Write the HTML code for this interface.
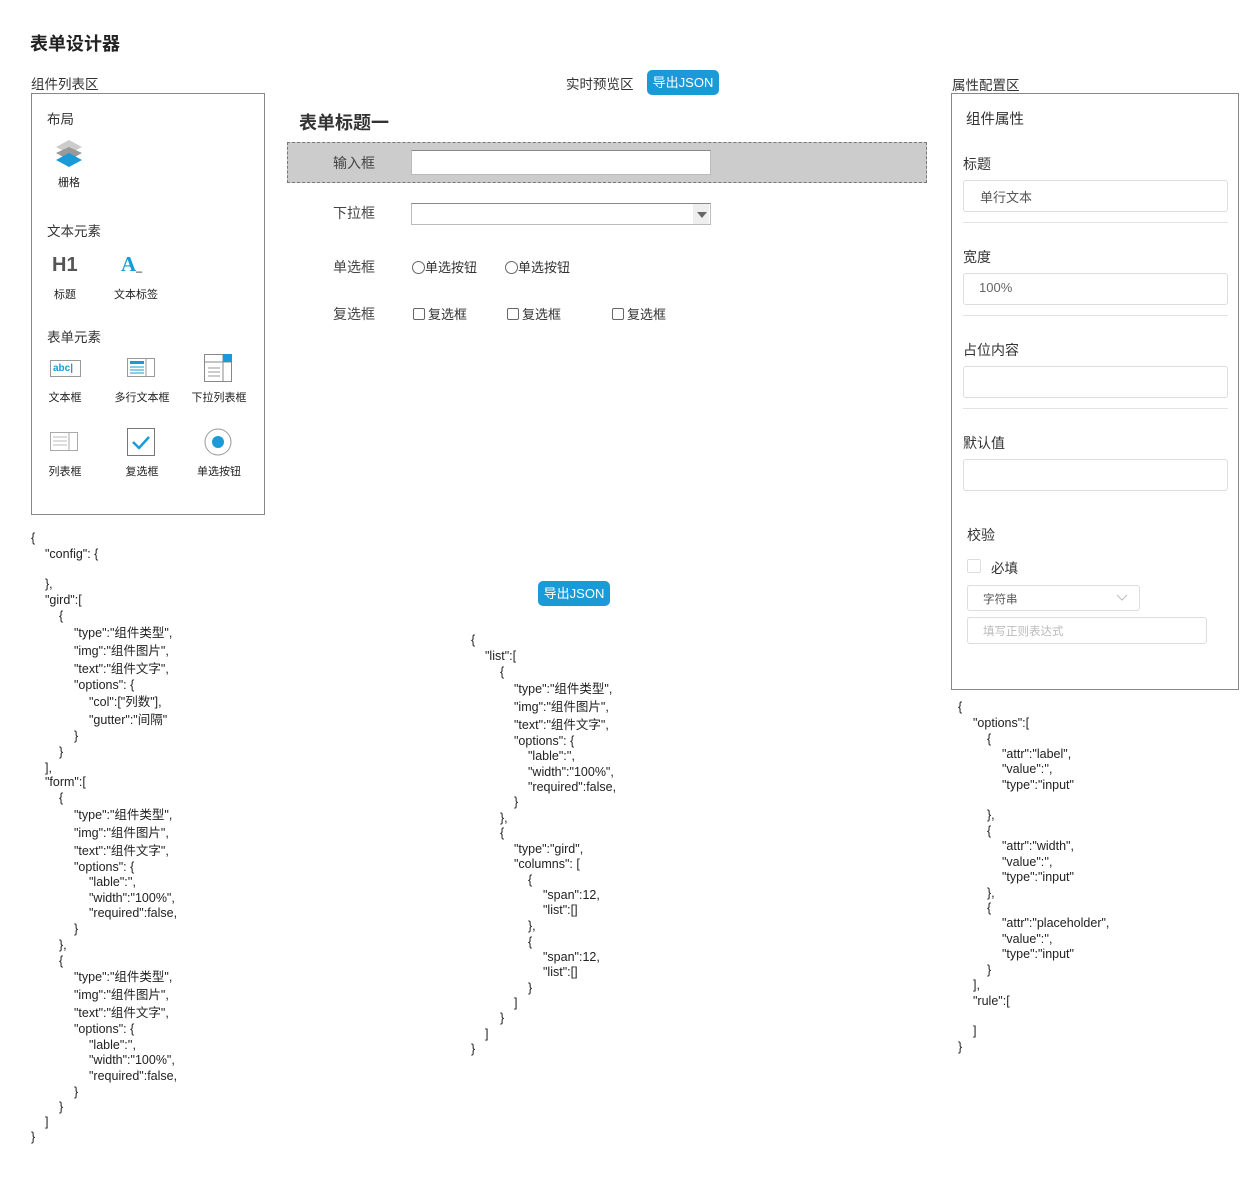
<!DOCTYPE html>
<html><head><meta charset="utf-8"><style>
body{margin:0;width:1259px;height:1190px;background:#fff;position:relative;font-family:"Liberation Sans","Noto Sans CJK SC",sans-serif;color:#333;overflow:hidden}
.a{position:absolute;white-space:nowrap}
.j{position:absolute;font-size:12.5px;line-height:16px;letter-spacing:0;color:#222;white-space:pre}
.btn{position:absolute;background:#1a9ad6;color:#fff;border-radius:5px;font-size:13px;text-align:center;line-height:25px}
.lbl{position:absolute;font-size:14px;color:#444}
.inp{position:absolute;border:1px solid #ddd;border-radius:3px;background:#fff;box-sizing:border-box}
.hr{position:absolute;height:1px;background:#e3e3e3}
.it{position:absolute;font-size:11px;color:#222;text-align:center;width:70px}
</style></head><body>
<div class="a" style="left:30px;top:30px;font-size:18px;font-weight:bold;color:#222">表单设计器</div>
<div class="a" style="left:31px;top:73px;font-size:13.5px;color:#333">组件列表区</div>
<div style="position:absolute;left:31px;top:93px;width:232px;height:420px;border:1px solid #888"></div>
<div class="a" style="left:47px;top:108px;font-size:13.5px">布局</div>
<svg class="a" style="left:55px;top:140px" width="28" height="28" viewBox="0 0 28 28"><polygon points="14,0 27,7 14,14 1,7" fill="#ccc"/><polygon points="14,7 27,13 14,20 1,13" fill="#999"/><polygon points="14,13 27,20 14,27 1,20" fill="#1a9ad6"/></svg>
<div class="it" style="left:34px;top:174px">栅格</div>
<div class="a" style="left:47px;top:220px;font-size:13.5px">文本元素</div>
<div class="a" style="left:52px;top:254px;font-size:20px;font-weight:bold;color:#555">H1</div>
<div class="a" style="left:121px;top:252px;font-size:21px;font-weight:bold;color:#1a9ad6;font-family:'Liberation Serif',serif">A<span style="font-size:12px;color:#333">_</span></div>
<div class="it" style="left:30px;top:286px">标题</div>
<div class="it" style="left:101px;top:286px">文本标签</div>
<div class="a" style="left:47px;top:326px;font-size:13.5px">表单元素</div>
<div class="a" style="left:50px;top:360px;width:27px;height:15px;border:1px solid #999;font-size:10px;font-weight:bold;color:#1a9ad6;line-height:15px;padding-left:2px;box-sizing:content-box">abc|</div>
<svg class="a" style="left:127px;top:358px" width="28" height="19"><rect x="0.5" y="0.5" width="27" height="18" fill="#fff" stroke="#999"/><line x1="19" y1="1" x2="19" y2="18" stroke="#999"/><rect x="3" y="3" width="14" height="3" fill="#1a9ad6"/><line x1="3" y1="9" x2="17" y2="9" stroke="#1a9ad6"/><line x1="3" y1="12" x2="17" y2="12" stroke="#1a9ad6"/><line x1="3" y1="15" x2="17" y2="15" stroke="#1a9ad6"/></svg>
<svg class="a" style="left:204px;top:354px" width="28" height="28"><rect x="0.5" y="0.5" width="27" height="27" fill="#fff" stroke="#888"/><line x1="0" y1="8" x2="28" y2="8" stroke="#888"/><line x1="19" y1="0" x2="19" y2="28" stroke="#888"/><rect x="19" y="0" width="9" height="8" fill="#1a9ad6"/><line x1="4" y1="14" x2="16" y2="14" stroke="#999"/><line x1="4" y1="18" x2="16" y2="18" stroke="#999"/><line x1="4" y1="22" x2="16" y2="22" stroke="#999"/></svg>
<div class="it" style="left:30px;top:389px">文本框</div>
<div class="it" style="left:107px;top:389px">多行文本框</div>
<div class="it" style="left:184px;top:389px">下拉列表框</div>
<svg class="a" style="left:50px;top:432px" width="28" height="19"><rect x="0.5" y="0.5" width="27" height="18" fill="#fff" stroke="#aaa"/><line x1="19" y1="1" x2="19" y2="18" stroke="#aaa"/><line x1="3" y1="5" x2="17" y2="5" stroke="#bbb"/><line x1="3" y1="9" x2="17" y2="9" stroke="#bbb"/><line x1="3" y1="13" x2="17" y2="13" stroke="#bbb"/></svg>
<svg class="a" style="left:127px;top:428px" width="28" height="28"><rect x="0.5" y="0.5" width="27" height="27" fill="#fff" stroke="#777"/><polyline points="6,14 12,20 22,9" fill="none" stroke="#1a9ad6" stroke-width="2.5"/></svg>
<svg class="a" style="left:204px;top:428px" width="28" height="28"><circle cx="14" cy="14" r="13" fill="#fff" stroke="#999"/><circle cx="14" cy="14" r="6" fill="#1a9ad6"/></svg>
<div class="it" style="left:30px;top:463px">列表框</div>
<div class="it" style="left:107px;top:463px">复选框</div>
<div class="it" style="left:184px;top:463px">单选按钮</div>

<div class="a" style="left:566px;top:73px;font-size:13.5px">实时预览区</div>
<div class="btn" style="left:647px;top:70px;width:72px">导出JSON</div>
<div class="a" style="left:299px;top:109px;font-size:18px;font-weight:bold;color:#333">表单标题一</div>
<div style="position:absolute;left:287px;top:142px;width:638px;height:39px;background:#ccc;border:1px dashed #777"></div>
<div class="lbl" style="left:333px;top:153px">输入框</div>
<div style="position:absolute;left:411px;top:150px;width:298px;height:23px;background:#fff;border:1px solid #bbb;border-top:1px solid #888"></div>
<div class="lbl" style="left:333px;top:203px">下拉框</div>
<div style="position:absolute;left:411px;top:203px;width:298px;height:20px;background:#fff;border:1px solid #bbb;border-top:1px solid #888"></div>
<div style="position:absolute;left:693px;top:204px;width:16px;height:20px;background:#eee"></div>
<div class="a" style="left:697px;top:212px;width:0;height:0;border-left:5px solid transparent;border-right:5px solid transparent;border-top:6px solid #666"></div>
<div class="lbl" style="left:333px;top:257px">单选框</div>
<div class="a" style="left:412px;top:257px;font-size:13px"><span style="display:inline-block;width:11px;height:11px;border:1px solid #666;border-radius:50%;vertical-align:-2px"></span>单选按钮</div>
<div class="a" style="left:505px;top:257px;font-size:13px"><span style="display:inline-block;width:11px;height:11px;border:1px solid #666;border-radius:50%;vertical-align:-2px"></span>单选按钮</div>
<div class="lbl" style="left:333px;top:304px">复选框</div>
<div class="a" style="left:413px;top:304px;font-size:13px"><span style="display:inline-block;width:10px;height:10px;border:1px solid #666;border-radius:2px;vertical-align:-1px;margin-right:3px"></span>复选框</div>
<div class="a" style="left:507px;top:304px;font-size:13px"><span style="display:inline-block;width:10px;height:10px;border:1px solid #666;border-radius:2px;vertical-align:-1px;margin-right:3px"></span>复选框</div>
<div class="a" style="left:612px;top:304px;font-size:13px"><span style="display:inline-block;width:10px;height:10px;border:1px solid #666;border-radius:2px;vertical-align:-1px;margin-right:3px"></span>复选框</div>
<div class="btn" style="left:538px;top:581px;width:72px">导出JSON</div>

<div class="a" style="left:952px;top:74px;font-size:13.5px">属性配置区</div>
<div style="position:absolute;left:951px;top:93px;width:286px;height:595px;border:1px solid #888"></div>
<div class="a" style="left:966px;top:108px;font-size:14.5px">组件属性</div>
<div class="a" style="left:963px;top:154px;font-size:14px">标题</div>
<div class="inp" style="left:963px;top:180px;width:265px;height:32px"></div>
<div class="a" style="left:980px;top:187px;font-size:13px;color:#555">单行文本</div>
<div class="hr" style="left:963px;top:222px;width:265px"></div>
<div class="a" style="left:963px;top:247px;font-size:14px">宽度</div>
<div class="inp" style="left:963px;top:273px;width:265px;height:32px"></div>
<div class="a" style="left:979px;top:280px;font-size:13px;color:#666">100%</div>
<div class="hr" style="left:963px;top:315px;width:265px"></div>
<div class="a" style="left:963px;top:340px;font-size:14px">占位内容</div>
<div class="inp" style="left:963px;top:366px;width:265px;height:32px"></div>
<div class="hr" style="left:963px;top:408px;width:265px"></div>
<div class="a" style="left:963px;top:433px;font-size:14px">默认值</div>
<div class="inp" style="left:963px;top:459px;width:265px;height:32px"></div>
<div class="a" style="left:967px;top:525px;font-size:14px">校验</div>
<div class="inp" style="left:967px;top:559px;width:14px;height:14px;border-radius:2px"></div>
<div class="a" style="left:991px;top:557px;font-size:13.5px">必填</div>
<div class="inp" style="left:967px;top:585px;width:173px;height:26px"></div>
<div class="a" style="left:983px;top:591px;font-size:11.5px;color:#555">字符串</div>
<svg class="a" style="left:1116px;top:594px" width="12" height="8"><polyline points="1,1 6,6 11,1" fill="none" stroke="#bbb"/></svg>
<div class="inp" style="left:967px;top:617px;width:240px;height:27px"></div>
<div class="a" style="left:983px;top:623px;font-size:11.5px;color:#bbb">填写正则表达式</div>

<div class="j" style="left:31px;top:530px">{</div>
<div class="j" style="left:45px;top:546px">"config": {</div>
<div class="j" style="left:45px;top:576px">},</div>
<div class="j" style="left:45px;top:592px">"gird":[</div>
<div class="j" style="left:59px;top:608px">{</div>
<div class="j" style="left:74px;top:625px">"type":"组件类型",</div>
<div class="j" style="left:74px;top:643px">"img":"组件图片",</div>
<div class="j" style="left:74px;top:661px">"text":"组件文字",</div>
<div class="j" style="left:74px;top:677px">"options": {</div>
<div class="j" style="left:89px;top:694px">"col":["列数"],</div>
<div class="j" style="left:89px;top:712px">"gutter":"间隔"</div>
<div class="j" style="left:74px;top:728px">}</div>
<div class="j" style="left:59px;top:744px">}</div>
<div class="j" style="left:45px;top:760px">],</div>
<div class="j" style="left:45px;top:774px">"form":[</div>
<div class="j" style="left:59px;top:790px">{</div>
<div class="j" style="left:74px;top:807px">"type":"组件类型",</div>
<div class="j" style="left:74px;top:825px">"img":"组件图片",</div>
<div class="j" style="left:74px;top:843px">"text":"组件文字",</div>
<div class="j" style="left:74px;top:859px">"options": {</div>
<div class="j" style="left:89px;top:874px">"lable":'',</div>
<div class="j" style="left:89px;top:890px">"width":"100%",</div>
<div class="j" style="left:89px;top:905px">"required":false,</div>
<div class="j" style="left:74px;top:921px">}</div>
<div class="j" style="left:59px;top:937px">},</div>
<div class="j" style="left:59px;top:953px">{</div>
<div class="j" style="left:74px;top:969px">"type":"组件类型",</div>
<div class="j" style="left:74px;top:987px">"img":"组件图片",</div>
<div class="j" style="left:74px;top:1005px">"text":"组件文字",</div>
<div class="j" style="left:74px;top:1021px">"options": {</div>
<div class="j" style="left:89px;top:1037px">"lable":'',</div>
<div class="j" style="left:89px;top:1052px">"width":"100%",</div>
<div class="j" style="left:89px;top:1068px">"required":false,</div>
<div class="j" style="left:74px;top:1084px">}</div>
<div class="j" style="left:59px;top:1099px">}</div>
<div class="j" style="left:45px;top:1114px">]</div>
<div class="j" style="left:31px;top:1129px">}</div>

<div class="j" style="left:471px;top:632px">{</div>
<div class="j" style="left:485px;top:648px">"list":[</div>
<div class="j" style="left:500px;top:664px">{</div>
<div class="j" style="left:514px;top:681px">"type":"组件类型",</div>
<div class="j" style="left:514px;top:699px">"img":"组件图片",</div>
<div class="j" style="left:514px;top:717px">"text":"组件文字",</div>
<div class="j" style="left:514px;top:733px">"options": {</div>
<div class="j" style="left:528px;top:748px">"lable":'',</div>
<div class="j" style="left:528px;top:764px">"width":"100%",</div>
<div class="j" style="left:528px;top:779px">"required":false,</div>
<div class="j" style="left:514px;top:794px">}</div>
<div class="j" style="left:500px;top:810px">},</div>
<div class="j" style="left:500px;top:825px">{</div>
<div class="j" style="left:514px;top:841px">"type":"gird",</div>
<div class="j" style="left:514px;top:856px">"columns": [</div>
<div class="j" style="left:528px;top:872px">{</div>
<div class="j" style="left:543px;top:887px">"span":12,</div>
<div class="j" style="left:543px;top:902px">"list":[]</div>
<div class="j" style="left:528px;top:918px">},</div>
<div class="j" style="left:528px;top:934px">{</div>
<div class="j" style="left:543px;top:949px">"span":12,</div>
<div class="j" style="left:543px;top:964px">"list":[]</div>
<div class="j" style="left:528px;top:980px">}</div>
<div class="j" style="left:514px;top:995px">]</div>
<div class="j" style="left:500px;top:1010px">}</div>
<div class="j" style="left:485px;top:1026px">]</div>
<div class="j" style="left:471px;top:1041px">}</div>

<div class="j" style="left:958px;top:699px">{</div>
<div class="j" style="left:973px;top:715px">"options":[</div>
<div class="j" style="left:987px;top:731px">{</div>
<div class="j" style="left:1002px;top:746px">"attr":"label",</div>
<div class="j" style="left:1002px;top:761px">"value":'',</div>
<div class="j" style="left:1002px;top:777px">"type":"input"</div>
<div class="j" style="left:987px;top:807px">},</div>
<div class="j" style="left:987px;top:823px">{</div>
<div class="j" style="left:1002px;top:838px">"attr":"width",</div>
<div class="j" style="left:1002px;top:854px">"value":'',</div>
<div class="j" style="left:1002px;top:869px">"type":"input"</div>
<div class="j" style="left:987px;top:885px">},</div>
<div class="j" style="left:987px;top:900px">{</div>
<div class="j" style="left:1002px;top:915px">"attr":"placeholder",</div>
<div class="j" style="left:1002px;top:931px">"value":'',</div>
<div class="j" style="left:1002px;top:946px">"type":"input"</div>
<div class="j" style="left:987px;top:962px">}</div>
<div class="j" style="left:973px;top:977px">],</div>
<div class="j" style="left:973px;top:993px">"rule":[</div>
<div class="j" style="left:973px;top:1023px">]</div>
<div class="j" style="left:958px;top:1039px">}</div>
</body></html>
